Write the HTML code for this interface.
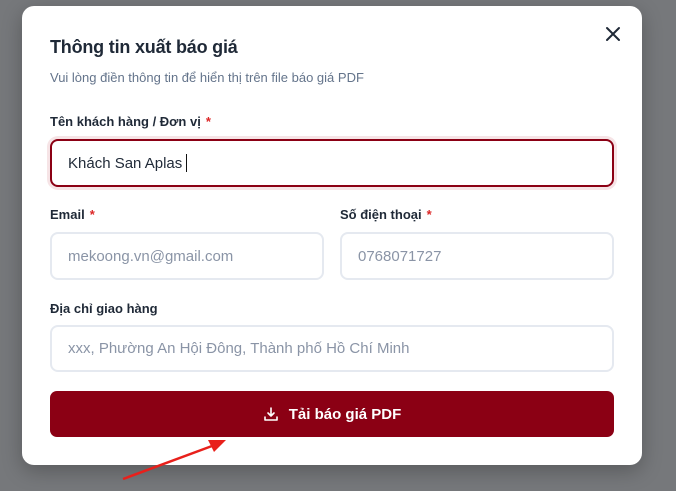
<!DOCTYPE html>
<html><head><meta charset="utf-8"><style>
*{box-sizing:border-box;margin:0;padding:0}
body{width:676px;height:491px;background:#76787b;font-family:"Liberation Sans",sans-serif;position:relative;overflow:hidden}
.m{position:absolute;left:22px;top:6px;width:620px;height:459px;background:#fff;border-radius:12px;box-shadow:0 6px 20px rgba(0,0,0,.25)}
.a{position:absolute}
h1{position:absolute;left:50px;top:37px;font-size:18px;font-weight:600;color:#1f2937;letter-spacing:-.2px}
.sub{left:50px;top:70px;font-size:13px;color:#64748b}
.lb{font-size:13px;font-weight:700;color:#1f2937}
.lb span{color:#dc2626;margin-left:5px}
.in{border:2px solid #e5e9f0;border-radius:8px;font-size:15px;color:#8a94a6;padding-left:16px;display:flex;align-items:center;background:#fff}
.btn{left:50px;top:391px;width:564px;height:46px;background:#8b0014;border-radius:7px;color:#fff;font-weight:700;font-size:15px;display:flex;align-items:center;justify-content:center;gap:10px}
</style></head><body>
<div class="m"></div>
<h1>Thông tin xuất báo giá</h1>
<div class="a sub">Vui lòng điền thông tin để hiển thị trên file báo giá PDF</div>
<svg class="a" style="left:605px;top:26px" width="16" height="16" viewBox="0 0 16 16"><path d="M2 2L14 14M14 2L2 14" stroke="#1f2937" stroke-width="2" stroke-linecap="round"/></svg>
<div class="a lb" style="left:50px;top:114px">Tên khách hàng / Đơn vị<span>*</span></div>
<div class="a" style="left:47px;top:136px;width:570px;height:54px;border-radius:11px;background:#f6e4e6"></div>
<div class="a in" style="left:50px;top:139px;width:564px;height:48px;border-color:#8b0014;color:#1f2937;">Khách San Aplas&nbsp;<span style="display:inline-block;width:1px;height:18px;background:#111"></span></div>
<div class="a lb" style="left:50px;top:207px">Email<span>*</span></div>
<div class="a lb" style="left:340px;top:207px">Số điện thoại<span>*</span></div>
<div class="a in" style="left:50px;top:232px;width:274px;height:48px">mekoong.vn@gmail.com</div>
<div class="a in" style="left:340px;top:232px;width:274px;height:48px">0768071727</div>
<div class="a lb" style="left:50px;top:301px">Địa chỉ giao hàng</div>
<div class="a in" style="left:50px;top:325px;width:564px;height:47px">xxx, Phường An Hội Đông, Thành phố Hồ Chí Minh</div>
<div class="a btn"><svg width="16" height="16" viewBox="0 0 16 16" fill="none" stroke="#fff" stroke-width="1.6" stroke-linecap="round" stroke-linejoin="round"><path d="M8 2v8M5 7l3 3 3-3M2 11v3h12v-3"/></svg>Tải báo giá PDF</div>
<svg class="a" style="left:0;top:0" width="676" height="491"><line x1="123" y1="479" x2="212" y2="446" stroke="#e8201b" stroke-width="2.5"/><polygon points="226,440 208,440 214,452" fill="#e8201b"/></svg>
</body></html>
